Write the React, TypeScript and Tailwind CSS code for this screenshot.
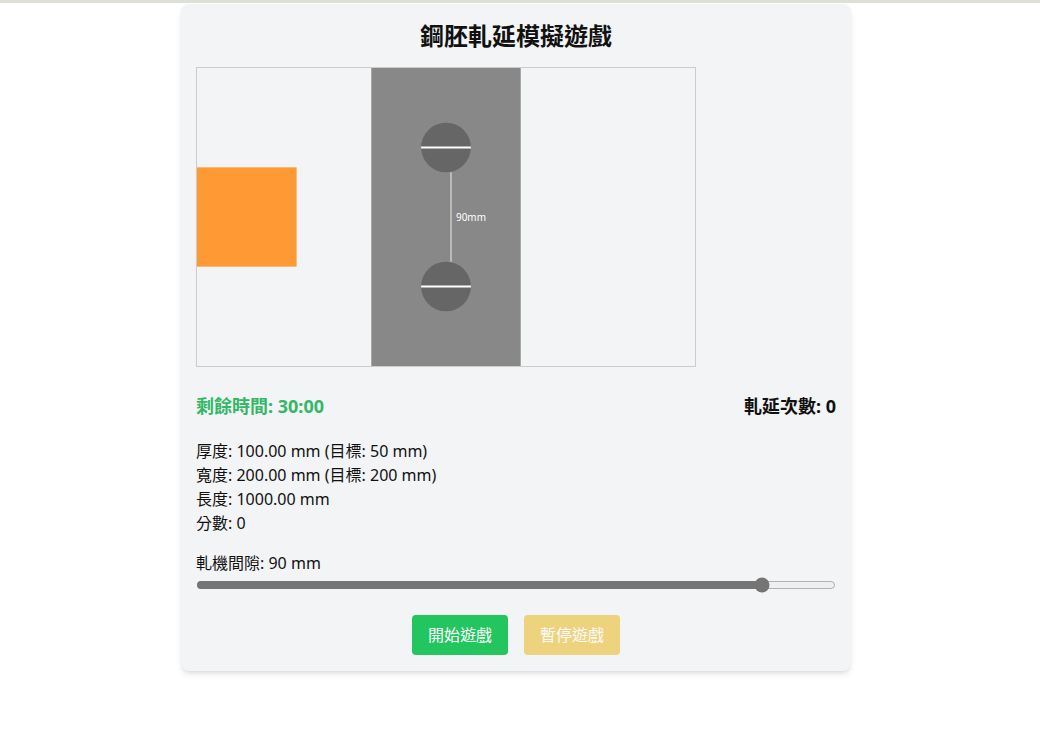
import { useState } from 'react';

const FONT = '"Noto Sans", "Noto Sans CJK TC", sans-serif';

function MillCanvas({ gap }: { gap: number }) {
  const topY = 150 - gap / 2 - 25;
  const bottomY = 150 + gap / 2 + 25;
  return (
    <div className="w-[500px] h-[300px] border border-[#cccccc] bg-[#f3f4f6]">
      <svg width="498" height="298" viewBox="0 0 500 300" preserveAspectRatio="none" className="block">
        <rect x="175" y="0" width="150" height="300" fill="#888888" />
        <rect x="0" y="100" width="100" height="100" fill="#ff9933" />
        <circle cx="250" cy={topY} r="25" fill="#666666" />
        <circle cx="250" cy={bottomY} r="25" fill="#666666" />
        <line x1="225" y1={topY} x2="275" y2={topY} stroke="#ffffff" strokeWidth="2" />
        <line x1="225" y1={bottomY} x2="275" y2={bottomY} stroke="#ffffff" strokeWidth="2" />
        <line x1="255" y1={topY + 25} x2="255" y2={bottomY - 25} stroke="#cccccc" strokeWidth="1.5" />
        <text x="260" y="154" fill="#ffffff" fontSize="10" fontFamily="'Noto Sans', sans-serif">
          {gap}mm
        </text>
      </svg>
    </div>
  );
}

export default function App() {
  const [gap, setGap] = useState(90);

  return (
    <div className="min-h-screen bg-white" style={{ fontFamily: FONT }}>
      <div className="h-[3px] bg-[#dedfd6]" />
      <div className="ml-[181px] mt-[1px] w-[670px] rounded-lg bg-[#f3f4f6] px-[15px] pt-4 pb-4 shadow-md">
        <h1 className="mb-[15px] text-center text-2xl leading-8 font-bold text-[#111111]">鋼胚軋延模擬遊戲</h1>

        <MillCanvas gap={gap} />

        <div className="mt-[25px] flex items-center justify-between text-lg leading-7 font-bold">
          <span className="text-[#34b867]">剩餘時間: 30:00</span>
          <span className="text-[#111111]">軋延次數: 0</span>
        </div>

        <div className="mt-[19px] text-base leading-6 text-[#111111]">
          <p>厚度: 100.00 mm (目標: 50 mm)</p>
          <p>寬度: 200.00 mm (目標: 200 mm)</p>
          <p>長度: 1000.00 mm</p>
          <p>分數: 0</p>
        </div>

        <div className="mt-4">
          <label className="block text-base leading-6 text-[#111111]">軋機間隙: {gap} mm</label>
          <input
            type="range"
            min={5}
            max={100}
            value={gap}
            onChange={(e) => setGap(Number(e.target.value))}
            className="mt-[2px] block h-4 w-full accent-[#757575]"
          />
        </div>

        <div className="mt-[22px] flex justify-center gap-4">
          <button type="button" className="rounded bg-[#22c55e] px-4 py-2 text-base leading-6 text-white">
            開始遊戲
          </button>
          <button type="button" disabled className="rounded bg-[#eab308] px-4 py-2 text-base leading-6 text-white opacity-50">
            暫停遊戲
          </button>
        </div>
      </div>
    </div>
  );
}
